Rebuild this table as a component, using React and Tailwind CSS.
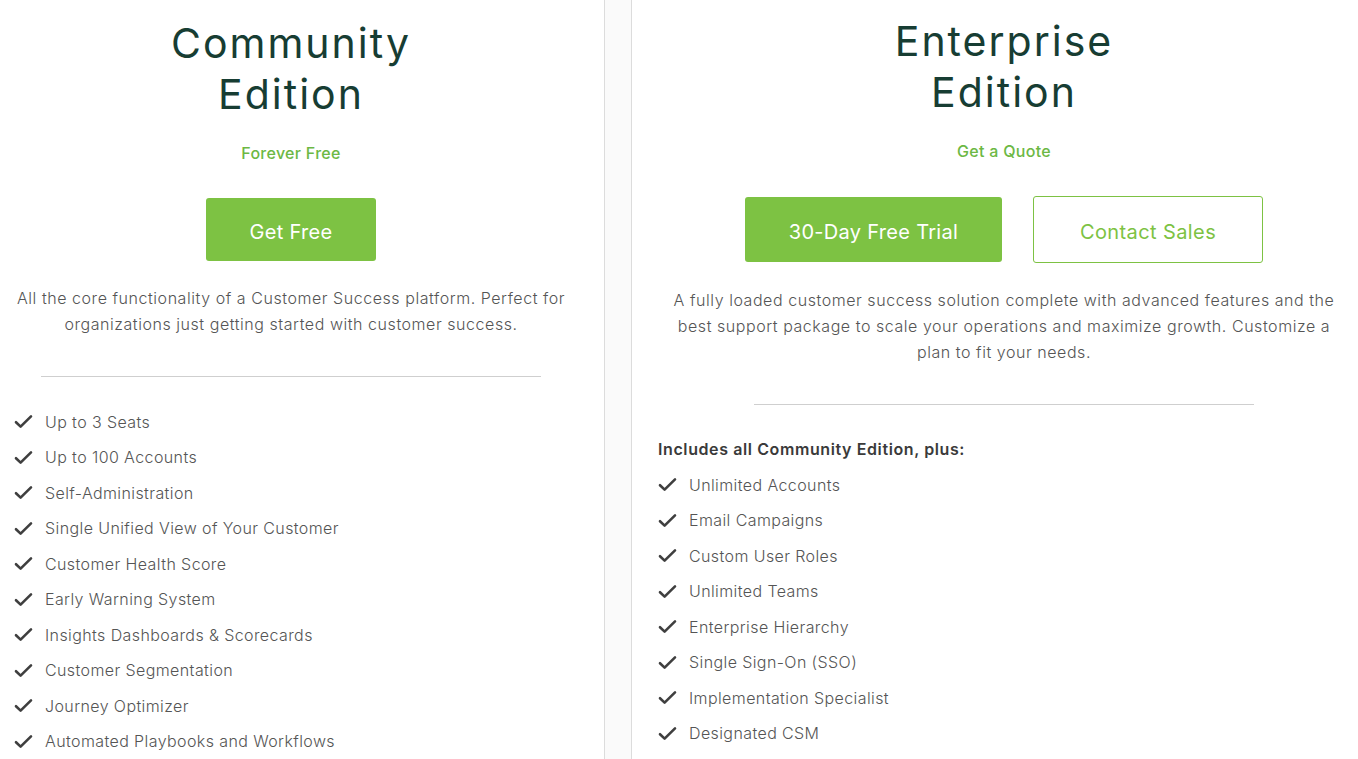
const COMMUNITY = [
  'Up to 3 Seats',
  'Up to 100 Accounts',
  'Self-Administration',
  'Single Unified View of Your Customer',
  'Customer Health Score',
  'Early Warning System',
  'Insights Dashboards & Scorecards',
  'Customer Segmentation',
  'Journey Optimizer',
  'Automated Playbooks and Workflows',
];

const ENTERPRISE = [
  'Unlimited Accounts',
  'Email Campaigns',
  'Custom User Roles',
  'Unlimited Teams',
  'Enterprise Hierarchy',
  'Single Sign-On (SSO)',
  'Implementation Specialist',
  'Designated CSM',
];

function CheckIcon() {
  return (
    <svg width="19" height="15" viewBox="0 0 19 15" className="shrink-0">
      <path d="M2 8.2 L6.6 12.6 L17 2.4" fill="none" stroke="#3f3f3f" strokeWidth="2.6" strokeLinecap="round" strokeLinejoin="round" />
    </svg>
  );
}

function Feature({ text }) {
  return (
    <li className="flex h-[35.5px] items-center gap-[12px]">
      <CheckIcon />
      <span>{text}</span>
    </li>
  );
}

export default function App() {
  return (
    <div className="flex h-[759px] w-[1358px] overflow-hidden bg-white font-['Inter','Liberation_Sans',sans-serif] text-[#555]">
      <section className="flex w-[582px] shrink-0 flex-col items-center pt-[18px]">
        <h2 className="text-center text-[41px] font-normal leading-[51px] tracking-[2px] text-[#173d33]">
          Community
          <br />
          Edition
        </h2>
        <p className="mt-[21px] text-[16px] leading-[24px] font-medium tracking-[0.3px] text-[#6cb844]">Forever Free</p>
        <button className="mt-[33px] h-[65px] w-[170px] rounded-[3px] bg-[#7dc243] pt-[5px] text-[20px] tracking-[0.3px] text-white">
          Get Free
        </button>
        <p className="mt-[24px] w-[570px] text-center text-[16px] leading-[26px] font-light tracking-[0.55px]">
          All the core functionality of a Customer Success platform. Perfect for organizations just getting started with customer success.
        </p>
        <div className="mt-[39px] h-px w-[500px] bg-[#cfcfcf]" />
        <ul className="mt-[27px] self-stretch pl-[14px] text-[16px] font-light tracking-[0.4px]">
          {COMMUNITY.map((t) => (
            <Feature key={t} text={t} />
          ))}
        </ul>
      </section>

      <div className="ml-[22px] w-[28px] shrink-0 border-x border-[#dcdcdc] bg-[#fafafa]" />

      <section className="flex flex-1 flex-col items-center pt-[16px] pl-[18px]">
        <h2 className="text-center text-[41px] font-normal leading-[51px] tracking-[2px] text-[#173d33]">
          Enterprise
          <br />
          Edition
        </h2>
        <p className="mt-[21px] text-[16px] leading-[24px] font-medium tracking-[0.3px] text-[#6cb844]">Get a Quote</p>
        <div className="mt-[34px] flex gap-[31px]">
          <button className="h-[65px] w-[257px] rounded-[3px] bg-[#7dc243] pt-[5px] text-[20px] tracking-[0.3px] text-white">
            30-Day Free Trial
          </button>
          <button className="h-[67px] w-[230px] -translate-y-px rounded-[3px] border border-[#7dc243] bg-white pt-[5px] text-[20px] tracking-[0.4px] text-[#7dc243]">
            Contact Sales
          </button>
        </div>
        <p className="mt-[23px] w-[680px] text-center text-[16px] leading-[26px] font-light tracking-[0.55px]">
          A fully loaded customer success solution complete with advanced features and the best support package to scale your operations and maximize growth. Customize a plan to fit your needs.
        </p>
        <div className="mt-[39px] h-px w-[500px] bg-[#cfcfcf]" />
        <div className="mt-[32px] self-stretch pl-[8px]">
          <p className="text-[16px] leading-[24px] font-semibold tracking-[0.6px] text-[#3a3a3a]">Includes all Community Edition, plus:</p>
          <ul className="mt-[6px] text-[16px] font-light tracking-[0.4px]">
            {ENTERPRISE.map((t) => (
              <Feature key={t} text={t} />
            ))}
          </ul>
        </div>
      </section>
    </div>
  );
}
